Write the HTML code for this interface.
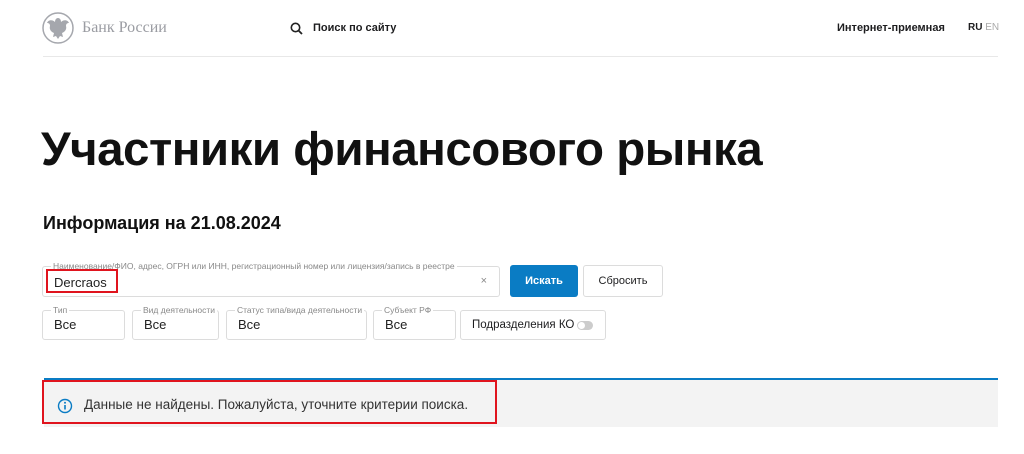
<!DOCTYPE html>
<html><head><meta charset="utf-8"><style>
*{box-sizing:border-box;margin:0;padding:0}
body{width:1024px;height:454px;background:#fff;font-family:"Liberation Sans","DejaVu Sans",sans-serif;color:#1d1d1f;position:relative;overflow:hidden}
.a{position:absolute}
.fld{position:absolute;border:1px solid #dcdcdc;border-radius:3px;height:30px}
.fld .lb{position:absolute;top:-6px;left:8px;background:#fff;font-size:8.5px;color:#888;padding:0 2px;white-space:nowrap}
.fld .v{position:absolute;left:11px;top:6px;font-size:13px;color:#222}
</style></head><body>
<svg class="a" style="left:42px;top:12px" width="32" height="32" viewBox="0 0 32 32"><circle cx="16" cy="16" r="15" fill="none" stroke="#a5a7ad" stroke-width="1.5"/><path d="M16 6c-2 0-3 2-3 4-3-3-7-2-8 1 2 0 3 1 3 3-1 3 1 6 4 7l-1 4 3-1 2 3 2-3 3 1-1-4c3-1 5-4 4-7 0-2 1-3 3-3-1-3-5-4-8-1 0-2-1-4-3-4z" fill="#a5a7ad"/></svg>
<div class="a" style="left:82px;top:19px;font-size:16px;color:#9a9ca2;font-family:'Liberation Serif',serif">Банк России</div>
<svg class="a" style="left:290px;top:22px" width="13" height="13" viewBox="0 0 13 13"><circle cx="5.5" cy="5.5" r="4.2" fill="none" stroke="#222" stroke-width="1.6"/><path d="M8.6 8.6L12 12" stroke="#222" stroke-width="1.8"/></svg>
<div class="a" style="left:313px;top:22px;font-size:11px;font-weight:bold">Поиск по сайту</div>
<div class="a" style="left:837px;top:22px;font-size:11px;font-weight:bold">Интернет-приемная</div>
<div class="a" style="left:968px;top:22px;font-size:10px;font-weight:bold">RU <span style="color:#aaa;font-weight:normal">EN</span></div>
<div class="a" style="left:43px;top:56px;width:955px;height:1px;background:#e8e8e8"></div>
<div class="a" style="left:41px;top:122px;font-size:47.5px;font-weight:bold;letter-spacing:-0.5px;color:#111">Участники финансового рынка</div>
<div class="a" style="left:43px;top:213px;font-size:18px;font-weight:bold;color:#111">Информация на 21.08.2024</div>
<div class="fld" style="left:42px;top:266px;width:458px;height:31px"><span class="lb">Наименование/ФИО, адрес, ОГРН или ИНН, регистрационный номер или лицензия/запись в реестре</span><span class="v" style="top:8px">Dercraos</span><span style="position:absolute;right:12px;top:8px;font-size:11px;color:#888">×</span></div>
<div class="a" style="left:46px;top:269px;width:72px;height:24px;border:2px solid #e0141e"></div>
<div class="a" style="left:510px;top:265px;width:68px;height:32px;background:#0a7cc4;border-radius:3px;color:#fff;font-size:11px;font-weight:bold;text-align:center;line-height:32px">Искать</div>
<div class="fld" style="left:583px;top:265px;width:80px;height:32px;text-align:center;line-height:30px;font-size:11px">Сбросить</div>
<div class="fld" style="left:42px;top:310px;width:83px"><span class="lb">Тип</span><span class="v">Все</span></div>
<div class="fld" style="left:132px;top:310px;width:87px"><span class="lb">Вид деятельности</span><span class="v">Все</span></div>
<div class="fld" style="left:226px;top:310px;width:141px"><span class="lb">Статус типа/вида деятельности</span><span class="v">Все</span></div>
<div class="fld" style="left:373px;top:310px;width:83px"><span class="lb">Субъект РФ</span><span class="v">Все</span></div>
<div class="fld" style="left:460px;top:310px;width:146px;font-size:11.5px;line-height:28px;padding-left:11px">Подразделения КО<span style="position:absolute;right:12px;top:10px;width:16px;height:9px;border-radius:5px;background:#ccc"><span style="position:absolute;left:1px;top:1px;width:7px;height:7px;border-radius:50%;background:#fff"></span></span></div>
<div class="a" style="left:44px;top:378px;width:954px;height:49px;background:#f3f3f3;border-top:2px solid #0a7cc4"></div>
<div class="a" style="left:42px;top:380px;width:455px;height:44px;border:2px solid #e0141e"></div>
<svg class="a" style="left:57px;top:398px" width="16" height="16" viewBox="0 0 16 16"><circle cx="8" cy="8" r="6.5" fill="none" stroke="#0a7cc4" stroke-width="1.4"/><path d="M8 7v4.5" stroke="#0a7cc4" stroke-width="1.6"/><circle cx="8" cy="4.8" r="1" fill="#0a7cc4"/></svg>
<div class="a" style="left:84px;top:397px;font-size:13.5px;color:#333">Данные не найдены. Пожалуйста, уточните критерии поиска.</div>
</body></html>
